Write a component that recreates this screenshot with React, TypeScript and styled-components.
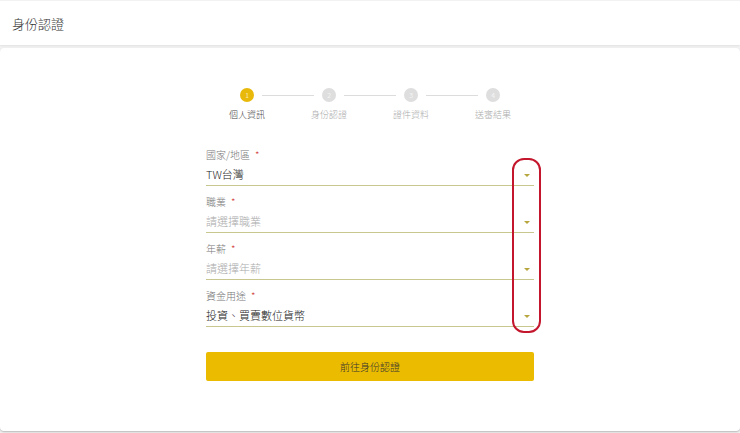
import React from 'react';
import styled, { createGlobalStyle } from 'styled-components';

const GlobalStyle = createGlobalStyle`
   html, body {
      margin: 0;
      padding: 0;
      background: #f3f3f3;
      font-family: "Noto Sans CJK TC", "Noto Sans", "Liberation Sans", sans-serif;
      font-weight: 300;
   }
`;

const StyledPage = styled.div`
   width: 740px;
   height: 433px;
   padding-top: 1px;
   box-sizing: border-box;
   display: flex;
   flex-direction: column;
   gap: 3px;
`;

const StyledHeader = styled.header`
   height: 44px;
   background: #fff;
   display: flex;
   align-items: center;
   padding: 0 12px;
   box-shadow: 0 1px 2px rgba(0, 0, 0, 0.08);
   font-size: 13px;
   color: #333;
`;

const StyledCard = styled.main`
   flex: 1;
   margin-bottom: 2px;
   background: #fff;
   border-radius: 4px;
   box-shadow: 0 1px 2px rgba(0, 0, 0, 0.25);
   display: flex;
   flex-direction: column;
   align-items: center;
   padding-top: 40px;
`;

const StyledStepper = styled.div`
   width: 328px;
   display: grid;
   grid-template-columns: repeat(4, 1fr);
`;

const StyledStep = styled.div<{ $last?: boolean }>`
   position: relative;
   display: flex;
   flex-direction: column;
   align-items: center;
   gap: 6px;

   &::after {
      content: '';
      display: ${(p) => (p.$last ? 'none' : 'block')};
      position: absolute;
      top: 7px;
      left: calc(50% + 15px);
      right: calc(-50% + 15px);
      height: 1px;
      background: #dcdcdc;
   }
`;

const StyledCircle = styled.span<{ $active?: boolean }>`
   width: 14px;
   height: 14px;
   border-radius: 50%;
   background: ${(p) => (p.$active ? '#e8b90b' : '#dedede')};
   color: #fff;
   font-size: 7px;
   line-height: 14px;
   text-align: center;
`;

const StyledStepLabel = styled.span<{ $active?: boolean }>`
   font-size: 9px;
   line-height: 13px;
   color: ${(p) => (p.$active ? '#444' : '#aaa')};
`;

const StyledForm = styled.form`
   position: relative;
   width: 328px;
   margin-top: 27px;
   display: flex;
   flex-direction: column;
   gap: 9px;
`;

const StyledField = styled.div`
   display: flex;
   flex-direction: column;
   gap: 1px;
`;

const StyledLabel = styled.label`
   font-size: 10px;
   line-height: 14px;
   color: #777;

   span {
      color: #d0312d;
      margin-left: 5px;
   }
`;

const StyledSelect = styled.div<{ $placeholder?: boolean }>`
   height: 22px;
   display: flex;
   align-items: center;
   justify-content: space-between;
   border-bottom: 1px solid #c8c78f;
   font-size: 11px;
   color: ${(p) => (p.$placeholder ? '#aaa' : '#222')};
   padding-right: 4px;
`;

const StyledArrow = styled.span`
   width: 0;
   height: 0;
   margin-top: 3px;
   border-left: 3px solid transparent;
   border-right: 3px solid transparent;
   border-top: 3px solid #b7a63e;
`;

const StyledHighlight = styled.div`
   position: absolute;
   left: 306px;
   top: 10px;
   width: 29px;
   height: 175px;
   box-sizing: border-box;
   border: 2px solid #c4162c;
   border-radius: 12px;
   pointer-events: none;
`;

const StyledButton = styled.button`
   margin-top: 16px;
   height: 29px;
   border: none;
   border-radius: 2px;
   background: #ebbb00;
   color: #333;
   font-family: inherit;
   font-weight: 300;
   font-size: 10px;
   cursor: pointer;
`;

const steps = ['個人資訊', '身份認證', '證件資料', '送審結果'];

const fields = [
   { label: '國家/地區', value: 'TW台灣', placeholder: false },
   { label: '職業', value: '請選擇職業', placeholder: true },
   { label: '年薪', value: '請選擇年薪', placeholder: true },
   { label: '資金用途', value: '投資、買賣數位貨幣', placeholder: false },
];

export default function App() {
   return (
      <>
         <GlobalStyle />
         <StyledPage>
            <StyledHeader>身份認證</StyledHeader>
            <StyledCard>
               <StyledStepper>
                  {steps.map((step, i) => (
                     <StyledStep key={step} $last={i === steps.length - 1}>
                        <StyledCircle $active={i === 0}>{i + 1}</StyledCircle>
                        <StyledStepLabel $active={i === 0}>{step}</StyledStepLabel>
                     </StyledStep>
                  ))}
               </StyledStepper>
               <StyledForm onSubmit={(e) => e.preventDefault()}>
                  {fields.map((f) => (
                     <StyledField key={f.label}>
                        <StyledLabel>
                           {f.label}
                           <span>*</span>
                        </StyledLabel>
                        <StyledSelect $placeholder={f.placeholder}>
                           {f.value}
                           <StyledArrow />
                        </StyledSelect>
                     </StyledField>
                  ))}
                  <StyledButton type="submit">前往身份認證</StyledButton>
                  {/* annotation */}
                  <StyledHighlight />
               </StyledForm>
            </StyledCard>
         </StyledPage>
      </>
   );
}
